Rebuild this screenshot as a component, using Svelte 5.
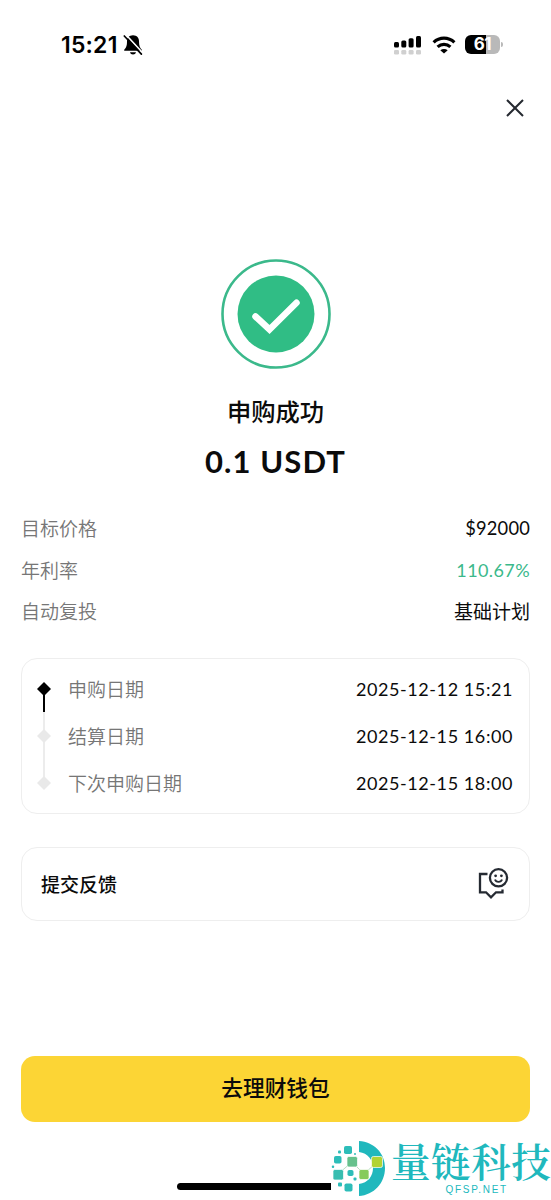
<script lang="ts">
  const details = [
    { label: "目标价格", value: "$92000", kind: "price" },
    { label: "年利率", value: "110.67%", kind: "rate" },
    { label: "自动复投", value: "基础计划", kind: "plan" },
  ];

  const steps = [
    { label: "申购日期", time: "2025-12-12 15:21" },
    { label: "结算日期", time: "2025-12-15 16:00" },
    { label: "下次申购日期", time: "2025-12-15 18:00" },
  ];

  // x, y, size, colour of the tiles in the brand mark
  const tiles: Array<[number, number, number, string]> = [
    [344, 1146, 8, "#2dbdb9"],
    [338, 1150.5, 3, "#2dbdb9"],
    [334, 1156, 7.5, "#2dbdb9"],
    [347, 1156.5, 10.5, "#66c18c"],
    [371.5, 1156.5, 11, "#b1d334"],
    [331.8, 1165.5, 2.4, "#2dbdb9"],
    [333, 1169.5, 10.5, "#38bdb0"],
    [347.5, 1170, 6, "#2dbdb9"],
    [359, 1169.5, 10, "#86cb5c"],
    [338, 1182.5, 4, "#2dbdb9"],
    [344.5, 1183.5, 8, "#2dbdb9"],
    [353.5, 1177.5, 3, "#2dbdb9"],
    [354, 1153, 2, "#2dbdb9"],
  ];
</script>

<div class="screen">
  <header class="status">
    <div class="clock">
      <span>15:21</span>
      <svg width="20" height="22" viewBox="0 0 20 22" aria-hidden="true">
        <path d="M10 1.300c-4 .2-6 2.600-6 6.300 0 4.500-.9 6.200-2.800 8.200v1h17.600v-1C16.900 13.800 16 12 16 7.600c0-3.700-2-6.100-6-6.300z" />
        <path d="M7 18.200h6c-.4 1.500-1.400 2.200-3 2.200s-2.600-.7-3-2.200z" />
        <path d="M3 .8 19.800 19" stroke="#fff" stroke-width="1.600" />
        <path d="M1.300 2 18.400 20.200" stroke="#000" stroke-width="1.700" stroke-linecap="round" />
      </svg>
    </div>
    <div class="signals">
      <svg width="28" height="20" viewBox="0 0 28 20" aria-hidden="true">
        <rect x="0" y="7" width="5" height="5.500" rx="1.500" />
        <rect x="7.300" y="5.500" width="5" height="7" rx="1.500" />
        <rect x="14.600" y="3.200" width="5" height="9.300" rx="1.500" />
        <rect x="22" y="1" width="5" height="11.500" rx="1.500" />
        {#each [0, 7.3, 14.6, 22] as x}
          <rect {x} y="15" width="5" height="4.500" rx="1.300" fill="#d0d0d0" />
        {/each}
      </svg>
      <svg class="wifi" width="24" height="18" viewBox="0 0 24 18" fill="none" stroke="#000" stroke-width="3.200" aria-hidden="true">
        <path d="M1.600 6.300c6-5.600 14.800-5.600 20.800 0" />
        <path d="M5.600 10.900c3.700-3.400 9.100-3.400 12.800 0" />
        <path d="M12 17.600 8.300 14.200c2.100-1.700 5.300-1.700 7.400 0z" fill="#000" stroke="none" />
      </svg>
      <div class="battery"><span>61</span></div>
      <i class="nub"></i>
    </div>
  </header>

  <div class="toolbar">
    <button class="close" aria-label="关闭">
      <svg width="18" height="18" viewBox="0 0 18 18" fill="none" stroke="#252930" stroke-width="2">
        <path d="M1 1 17 17M17 1 1 17" />
      </svg>
    </button>
  </div>

  <section class="result">
    <svg width="110" height="110" viewBox="0 0 110 110" aria-hidden="true">
      <circle cx="55" cy="55" r="53.500" fill="none" stroke="#3bb98b" stroke-width="2.600" />
      <circle cx="55" cy="55" r="38.500" fill="#30bd85" />
      <path d="M34.500 57.500 48.500 70.500 75.500 43.700" fill="none" stroke="#fff" stroke-width="6.500" stroke-linecap="round" />
    </svg>
    <h1>申购成功</h1>
    <div class="amount">0.1 USDT</div>
  </section>

  <section class="details">
    {#each details as d}
      <div class="row">
        <span class="label">{d.label}</span>
        <span class="value {d.kind}">{d.value}</span>
      </div>
    {/each}
  </section>

  <section class="card timeline">
    <svg width="16" height="112" viewBox="0 0 16 112" aria-hidden="true">
      <path d="M8 8V102" stroke="#ececec" stroke-width="2" />
      <path d="M8 8V31" stroke="#000" stroke-width="2" />
      <path d="M8 1 15 8 8 15 1 8z" />
      <path d="M8 48 15 55 8 62 1 55z" fill="#e9e9e9" />
      <path d="M8 95 15 102 8 109 1 102z" fill="#e9e9e9" />
    </svg>
    <div class="steps">
      {#each steps as s}
        <div class="step">
          <span class="label">{s.label}</span>
          <span class="time">{s.time}</span>
        </div>
      {/each}
    </div>
  </section>

  <section class="card feedback">
    <span>提交反馈</span>
    <svg width="31" height="32" viewBox="0 0 31 32" fill="none" stroke="#252a32" stroke-width="2.300" aria-hidden="true">
      <path d="M9.500 6H2V24.300H8L13 29.300 18 24.300H24.500V21.500" />
      <circle cx="20.500" cy="9.800" r="8.600" />
      <path d="M17 11.500c1 3.200 6 3.200 7 0" stroke-width="1.900" />
      <circle cx="17.600" cy="7.800" r="1.400" fill="#252a32" stroke="none" />
      <circle cx="23.400" cy="7.800" r="1.400" fill="#252a32" stroke="none" />
    </svg>
  </section>

  <button class="primary">去理财钱包</button>
  <div class="home"></div>

  <div class="brand">
    <svg width="56" height="60" viewBox="331 1138 56 60" aria-hidden="true">
      <path d="M359 1141c15 1 26 12 26 27s-11 27-26 28v-12c9-1 14-8 14-16s-5-15-14-16z" fill="#20b8bd" />
      <path d="M352 1162 364 1174 377 1162M338 1174 352 1162" fill="none" stroke="#a6d6b4" stroke-width=".8" />
      {#each tiles as [x, y, size, fill]}
        <rect {x} {y} width={size} height={size} rx={size > 5 ? 1.8 : 1} {fill} stroke="#fff" stroke-width={size > 9 ? 0.7 : 0} />
      {/each}
    </svg>
    <div class="words">
      <strong>量链科技</strong>
      <small>QFSP.NET</small>
    </div>
  </div>
</div>

<style>
  :global(body) { background: #fff; }
  .screen {
    position: relative; width: 551px; height: 1200px; box-sizing: border-box; overflow: hidden;
    padding: 0 21px; display: flex; flex-direction: column; background: #fff; color: #0b0b0b;
    font-family: Lato, "Noto Sans CJK SC", sans-serif; font-size: 19px;
  }
  svg { display: block; flex: none; }
  button { border: 0; padding: 0; font: inherit; color: inherit; }

  .status {
    height: 89px; flex: none; display: flex; align-items: center; justify-content: space-between;
    padding: 0 27px 0 40px; font-family: Inter, sans-serif; color: #000;
  }
  .clock { display: flex; align-items: center; gap: 5px; font-size: 23px; font-weight: 600; letter-spacing: 0.200px; }
  .signals { display: flex; align-items: center; }
  .wifi { margin-left: 10px; }
  .battery {
    width: 35px; height: 19px; margin-left: 9px; border-radius: 6px; display: grid; place-items: center;
    background: linear-gradient(90deg, #000 61%, #b9b9b9 61%);
    color: #fff; font-size: 17px; line-height: 19px; font-weight: 700; letter-spacing: -0.5px;
  }
  .nub { width: 2px; height: 5px; margin-left: 1px; border-radius: 0 2px 2px 0; background: #b9b9b9; }

  .toolbar { height: 38px; flex: none; display: flex; align-items: center; justify-content: flex-end; padding-right: 6px; }
  .close { background: none; }

  .result { margin-top: 132px; display: flex; flex-direction: column; align-items: center; }
  h1 { margin: 25px 0 0; font-size: 24.300px; line-height: 36px; font-weight: 500; }
  .amount { margin-top: 9px; font-size: 31px; line-height: 44px; font-weight: 700; letter-spacing: 1.100px; }

  .details { margin-top: 24px; }
  .row { height: 41.700px; display: flex; align-items: center; justify-content: space-between; }
  .row .label { margin-top: -1px; }
  .label { color: #767676; font-weight: 350; }
  .price { font-size: 18.300px; letter-spacing: 0.200px; }
  .rate { color: #3bb98b; font-size: 18px; letter-spacing: 0.400px; }
  .plan { margin-top: -1px; }

  .card { flex: none; box-sizing: border-box; border: 1.500px solid #eee; border-radius: 16px; display: flex; }
  .timeline { height: 156px; margin-top: 26px; padding: 22px 16px 0 14px; gap: 16px; }
  .steps { flex: 1; margin-top: -16px; }
  .step { height: 47px; display: flex; align-items: center; justify-content: space-between; }
  .time { font-size: 18px; letter-spacing: 0.580px; }
  .feedback { height: 74px; margin-top: 33px; padding: 0 20px 0 19px; align-items: center; justify-content: space-between; font-weight: 500; }
  .feedback span { margin-top: -2px; }

  .primary {
    height: 66px; flex: none; margin-top: 135px; border-radius: 14px; background: #fcd535;
    font-size: 21.700px; line-height: 62px; padding-bottom: 2px; font-weight: 500;
  }
  .home { width: 197px; height: 7px; margin: 61px auto 0; border-radius: 4px; background: #000; }

  .brand { position: absolute; left: 331px; bottom: 0; width: 220px; height: 62px; display: flex; background: #fff; color: #20b8bd; }
  .words { display: flex; flex-direction: column; align-items: center; margin-left: 4px; }
  .words strong {
    font-family: "Noto Serif CJK SC", "Noto Sans CJK SC", serif; font-size: 39.500px; line-height: 44px;
    font-weight: 600; letter-spacing: 0.600px; white-space: nowrap;
  }
  .words small { font: 10px/11px "Liberation Sans", sans-serif; letter-spacing: 1.700px; margin: 2px 0 0 11px; }
</style>
